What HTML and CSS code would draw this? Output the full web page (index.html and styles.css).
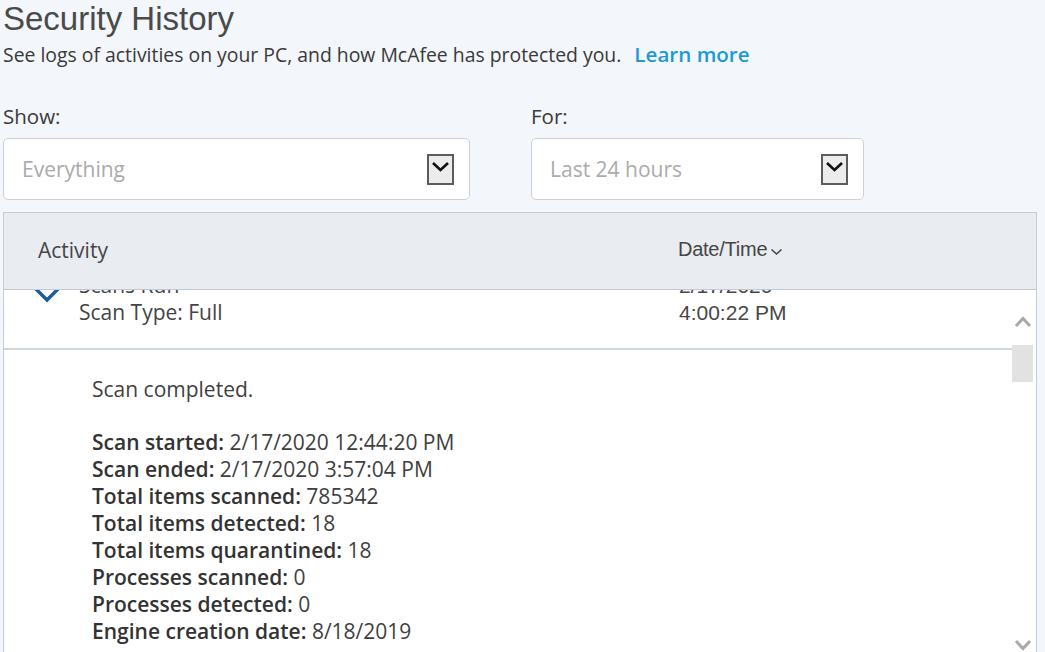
FILE: index.html
```html
<!DOCTYPE html>
<html lang="en">
<head>
<meta charset="utf-8">
<title>Security History</title>
<link rel="stylesheet" href="styles.css">
</head>
<body>
<div class="page">
  <h1 class="title">Security History</h1>
  <p class="subtitle">See logs of activities on your PC, and how McAfee has protected you. <a class="learn" href="#">Learn more</a></p>

  <div class="filters">
    <div class="filter filter-show">
      <div class="filter-label">Show:</div>
      <div class="select">
        <span class="select-value">Everything</span>
        <span class="select-btn">
          <svg width="23" height="27" viewBox="0 0 23 27"><polyline points="4,7 11.5,14 19,7" fill="none" stroke="#111" stroke-width="2.6"/></svg>
        </span>
      </div>
    </div>
    <div class="filter filter-for">
      <div class="filter-label">For:</div>
      <div class="select">
        <span class="select-value">Last 24 hours</span>
        <span class="select-btn">
          <svg width="23" height="27" viewBox="0 0 23 27"><polyline points="4,7 11.5,14 19,7" fill="none" stroke="#111" stroke-width="2.6"/></svg>
        </span>
      </div>
    </div>
  </div>

  <div class="table">
    <div class="thead">
      <div class="th th-activity">Activity</div>
      <div class="th th-date">Date/Time<svg class="sort-icon" width="13" height="8" viewBox="0 0 13 8"><polyline points="1.5,1.5 6.5,6 11.5,1.5" fill="none" stroke="#444" stroke-width="1.6"/></svg></div>
    </div>
    <div class="tbody">
      <div class="viewport">
        <div class="scroll-content">
          <div class="row">
            <div class="row-toggle">
              <svg width="26" height="16" viewBox="0 0 26 16"><polyline points="2,2 13,13 24,2" fill="none" stroke="#1d5d96" stroke-width="3.4"/></svg>
            </div>
            <div class="row-activity">
              <div>Scans Run</div>
              <div>Scan Type: Full</div>
            </div>
            <div class="row-date">
              <div>2/17/2020</div>
              <div>4:00:22 PM</div>
            </div>
          </div>
          <div class="details">
            <p class="details-summary">Scan completed.</p>
            <ul class="details-list">
              <li><b>Scan started:</b> 2/17/2020 12:44:20 PM</li>
              <li><b>Scan ended:</b> 2/17/2020 3:57:04 PM</li>
              <li><b>Total items scanned:</b> 785342</li>
              <li><b>Total items detected:</b> 18</li>
              <li><b>Total items quarantined:</b> 18</li>
              <li><b>Processes scanned:</b> 0</li>
              <li><b>Processes detected:</b> 0</li>
              <li><b>Engine creation date:</b> 8/18/2019</li>
            </ul>
          </div>
        </div>
      </div>
      <div class="scrollbar">
        <div class="sb-up">
          <svg width="18" height="13" viewBox="0 0 18 13"><polyline points="2,11 9,3.5 16,11" fill="none" stroke="#a9a9a9" stroke-width="3"/></svg>
        </div>
        <div class="sb-thumb"></div>
        <div class="sb-track"></div>
        <div class="sb-down">
          <svg width="18" height="13" viewBox="0 0 18 13"><polyline points="2,2 9,9.5 16,2" fill="none" stroke="#a9a9a9" stroke-width="3"/></svg>
        </div>
      </div>
    </div>
  </div>
</div>
</body>
</html>
```

FILE: styles.css
```css
html, body {
  margin: 0;
  padding: 0;
  height: 100%;
  overflow: hidden;
  background: #f3f6fa;
}

body {
  font-family: "Open Sans", "Liberation Sans", sans-serif;
  color: #3d3d3d;
}

.page {
  padding-left: 3px;
}

.title {
  margin: 1px 0 0 0;
  font-family: "Liberation Sans", Arial, sans-serif;
  font-weight: normal;
  font-size: 33px;
  line-height: 36px;
  color: #4a4a4a;
}

.subtitle {
  margin: 5px 0 0 0;
  font-size: 19.4px;
  line-height: 24px;
  color: #3a3a3a;
}

.learn {
  margin-left: 8px;
  font-size: 20.6px;
  color: #1c9ad6;
  font-weight: 600;
  text-decoration: none;
}

.filters {
  display: flex;
  gap: 61px;
  margin-top: 37px;
}

.filter-show { width: 467px; }
.filter-for { width: 333px; }

.filter-label {
  font-size: 20.5px;
  line-height: 24px;
  color: #3a3a3a;
  margin-bottom: 10px;
}

.select {
  box-sizing: border-box;
  height: 62px;
  background: #fff;
  border: 1px solid #cdd2d9;
  border-radius: 5px;
  display: flex;
  align-items: center;
  justify-content: space-between;
  padding: 0 15px 0 18px;
}

.select-value {
  font-size: 21px;
  color: #ababab;
}

.select-btn {
  box-sizing: border-box;
  width: 27px;
  height: 31px;
  border: 2px solid #5c5c5c;
  background: #ececec;
  display: flex;
  align-items: center;
  justify-content: center;
  margin-top: 1px;
}

.select-btn svg { display: block; }

.table {
  margin-top: 12px;
  width: 1034px;
  box-sizing: border-box;
  border: 1px solid #c6ccd4;
  border-bottom: none;
  background: #fff;
}

.thead {
  background: #e9ecf1;
  border-bottom: 1px solid #c3c9d2;
  display: flex;
  align-items: center;
  padding-bottom: 3px;
  box-sizing: content-box;
  height: 73px;
}

.th-activity {
  width: 640px;
  padding-left: 34px;
  font-size: 21px;
  color: #454545;
}

.th-date {
  font-family: "Liberation Sans", Arial, sans-serif;
  font-size: 20px;
  letter-spacing: -0.25px;
  color: #454545;
  display: flex;
  align-items: center;
}

.sort-icon {
  margin-left: 3px;
  margin-top: 5px;
}

.tbody {
  display: flex;
  height: 390px;
}

.viewport {
  flex: 1;
  overflow: hidden;
}

.scroll-content {
  margin-top: -40px;
}

.row {
  display: flex;
  padding: 22px 0 22px 30px;
  border-bottom: 2px solid #cfd6e0;
  font-size: 21px;
  line-height: 27px;
  color: #444;
}

.row-toggle {
  width: 45px;
  padding-top: 15px;
}

.row-toggle svg { display: block; }

.row-activity {
  width: 600px;
}

.row-date {
  font-family: "Liberation Sans", Arial, sans-serif;
  font-size: 21px;
  color: #474747;
}

.details {
  padding: 26px 0 0 88px;
  font-size: 21px;
  line-height: 27px;
  color: #3f3f3f;
}

.details-summary {
  margin: 0 0 26px 0;
}

.details-list {
  list-style: none;
  margin: 0;
  padding: 0;
}

.details-list b {
  font-weight: 600;
  color: #333;
}

.scrollbar {
  width: 24px;
  display: flex;
  flex-direction: column;
  background: #fff;
}

.sb-up {
  height: 55px;
  padding-left: 2px;
  padding-top: 25px;
  box-sizing: border-box;
}

.sb-up svg, .sb-down svg { display: block; }

.sb-thumb {
  width: 21px;
  height: 37px;
  background: #e2e2e2;
}

.sb-track { flex: 1; }

.sb-down {
  height: 41px;
  padding-left: 2px;
  box-sizing: border-box;
}
```
